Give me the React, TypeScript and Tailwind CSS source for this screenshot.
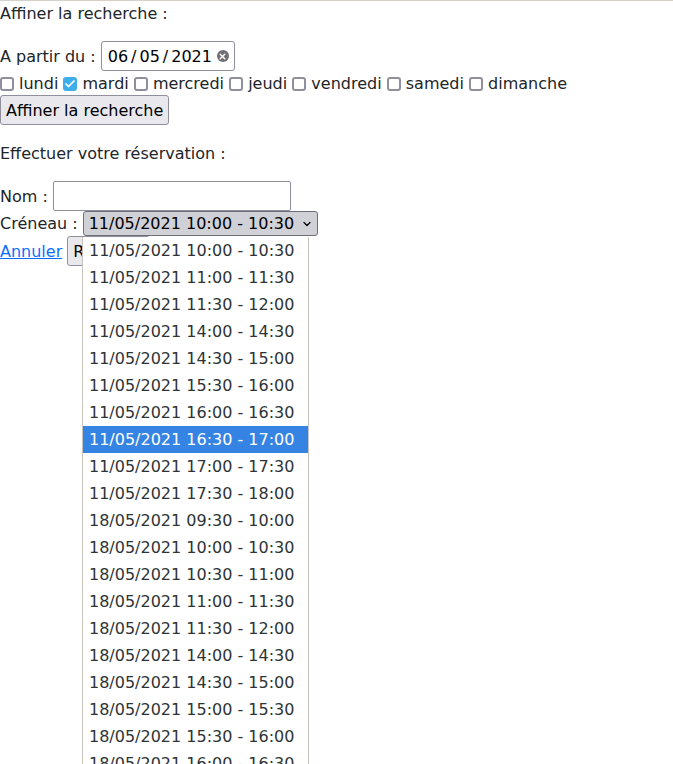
import { Check, ChevronDown, X } from "lucide-react";

const days = ["lundi", "mardi", "mercredi", "jeudi", "vendredi", "samedi", "dimanche"];

const slots = [
  "11/05/2021 10:00 - 10:30",
  "11/05/2021 11:00 - 11:30",
  "11/05/2021 11:30 - 12:00",
  "11/05/2021 14:00 - 14:30",
  "11/05/2021 14:30 - 15:00",
  "11/05/2021 15:30 - 16:00",
  "11/05/2021 16:00 - 16:30",
  "11/05/2021 16:30 - 17:00",
  "11/05/2021 17:00 - 17:30",
  "11/05/2021 17:30 - 18:00",
  "18/05/2021 09:30 - 10:00",
  "18/05/2021 10:00 - 10:30",
  "18/05/2021 10:30 - 11:00",
  "18/05/2021 11:00 - 11:30",
  "18/05/2021 11:30 - 12:00",
  "18/05/2021 14:00 - 14:30",
  "18/05/2021 14:30 - 15:00",
  "18/05/2021 15:00 - 15:30",
  "18/05/2021 15:30 - 16:00",
  "18/05/2021 16:00 - 16:30",
];

function DayCheck({ label, checked }: { label: string; checked: boolean }) {
  return (
    <label className="flex items-center">
      {checked ? (
        <span className="flex h-[14px] w-[14px] shrink-0 items-center justify-center rounded-[3px] bg-[#3daee9]">
          <Check className="h-3 w-3 text-white" strokeWidth={3.5} />
        </span>
      ) : (
        <span className="h-[14px] w-[14px] shrink-0 rounded-[3px] border-2 border-[#8f8f9d] bg-white" />
      )}
      <span className="ml-[5px]">{label}</span>
    </label>
  );
}

export default function App() {
  return (
    <div className="relative h-[764px] w-[673px] overflow-hidden border-t border-[#d5d0c8] bg-white font-['DejaVu_Sans',sans-serif] text-base leading-6 text-[#212529]">
      <p className="mb-[15px] pt-px">Affiner la recherche :</p>

      <div className="flex h-[30px] items-center">
        <span className="pt-[2px]">A partir du :</span>
        <div className="ml-[5px] flex h-[30px] w-[134px] items-center rounded-[3px] border border-[#8f8f9d] pl-[6px] pt-[2px] text-black">
          <span>06</span>
          <span className="mx-[3px]">/</span>
          <span>05</span>
          <span className="mx-[3px]">/</span>
          <span>2021</span>
          <span className="mb-[2px] ml-[5px] flex h-[12px] w-[12px] items-center justify-center rounded-full bg-[#6f6f74]">
            <X className="h-[9px] w-[9px] text-white" strokeWidth={4} />
          </span>
        </div>
      </div>

      <div className="mt-px flex h-6 items-center gap-[5.15px]">
        {days.map((day) => (
          <DayCheck key={day} label={day} checked={day === "mardi"} />
        ))}
      </div>

      <button className="-mt-px block h-[30px] rounded-[3px] border border-[#8f8f9d] bg-[#e9e9ed] px-[5px] pt-[2px] text-black">
        Affiner la recherche
      </button>

      <p className="mb-[15px] mt-4 pt-px">Effectuer votre réservation :</p>

      <div className="flex h-[30px] items-center">
        <span className="pt-[2px]">Nom :</span>
        <input className="ml-[5px] h-[30px] w-[238px] rounded-[2px] border border-[#8f8f9d]" />
      </div>

      <div className="flex h-[25px] items-center">
        <span>Créneau :</span>
        <div className="ml-[5px] flex h-[25px] w-[235px] items-center rounded-[3px] border border-[#6f6f7a] bg-[#d0d0d7] pl-[5px] text-black">
          <span>{slots[0]}</span>
          <ChevronDown className="ml-[7px] h-3 w-3 text-black" strokeWidth={2.5} />
        </div>
      </div>

      <div className="flex h-[30px] items-center">
        <a href="#" className="mt-[2px] text-[#0d6efd] underline">
          Annuler
        </a>
        <button className="ml-[5px] h-[30px] rounded-[3px] border border-[#8f8f9d] bg-[#e9e9ed] px-[5px] pt-[2px] text-black">
          Réserver
        </button>
      </div>

      <ul className="absolute left-[82px] top-[236px] w-[227px] border-x border-[#c8c3bc] bg-white text-[#2e3436]">
        {slots.map((slot, i) => (
          <li
            key={slot}
            className={`h-[27px] pl-[6px] leading-[27px] ${i === 7 ? "bg-[#3584e4] text-white" : ""}`}
          >
            {slot}
          </li>
        ))}
      </ul>
    </div>
  );
}
